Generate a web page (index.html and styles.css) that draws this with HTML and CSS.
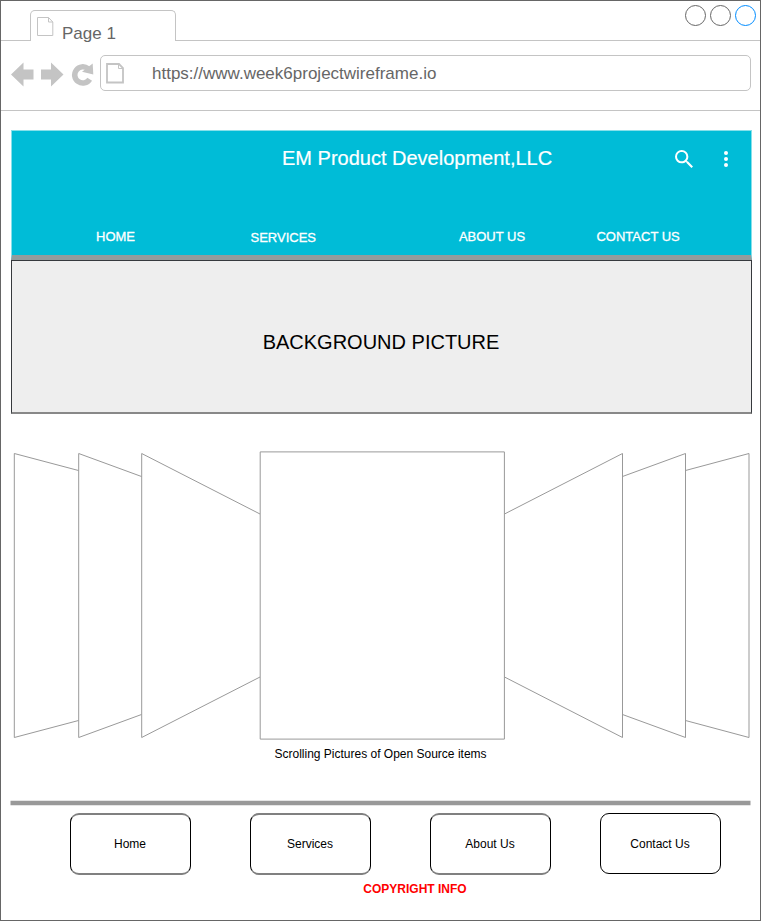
FILE: index.html
```html
<!DOCTYPE html>
<html lang="en">
<head>
<meta charset="utf-8">
<title>Page 1</title>
<link rel="stylesheet" href="styles.css">
</head>
<body>
<div class="window">
  <div class="tabs">
    <div class="tab">
      <svg class="tab-icon" width="17" height="20" viewBox="0 0 17 20"><path d="M.5.5H11.5L15.8 5V18.5H.5ZM11.5.5V5H15.8"/></svg>
      <span>Page 1</span>
    </div>
    <div class="controls"><i></i><i></i><i class="active"></i></div>
  </div>
  <div class="toolbar">
    <svg class="nav-icons" width="84" height="26" viewBox="0 0 84 26">
      <path d="M0 12.5 12.5 0.5V7.5H22.5V17.5H12.5V24.5Z"/>
      <path d="M52.5 12.5 40 0.5V7.5H30V17.5H40V24.5Z"/>
      <path class="reload" d="M78.7 17.2A8.1 8.1 0 1 1 77 6.7"/>
      <path d="M81.7 1.5 82.3 12.5 71 9.8Z"/>
    </svg>
    <div class="address">
      <svg width="19" height="22" viewBox="0 0 19 22"><path d="M1 1H13L17 5V19.5H1Z"/><path class="fold" d="M12.5 1V5.5H17"/></svg>
      <span>https://www.week6projectwireframe.io</span>
    </div>
  </div>
  <main>
    <header>
      <div class="brand">
        <h1>EM Product Development,LLC</h1>
        <svg class="search" width="18" height="18" viewBox="3 3 17.5 17.5"><path d="M15.5 14h-.79l-.28-.27A6.47 6.47 0 0 0 16 9.5 6.5 6.5 0 1 0 9.5 16c1.61 0 3.09-.59 4.23-1.57l.27.28v.79l5 4.99L20.49 19zm-6 0C7.01 14 5 11.99 5 9.5S7.01 5 9.5 5 14 7.01 14 9.5 11.99 14 9.5 14z"/></svg>
        <svg class="more" width="4" height="16" viewBox="0 0 4 16"><circle cx="2" cy="2" r="2"/><circle cx="2" cy="8" r="2"/><circle cx="2" cy="14" r="2"/></svg>
      </div>
      <nav><a>HOME</a><a class="low">SERVICES</a><a>ABOUT US</a><a>CONTACT US</a></nav>
    </header>
    <section class="hero">BACKGROUND PICTURE</section>
    <figure>
      <svg class="coverflow" width="739" height="290" viewBox="11 450 739 290">
        <path d="M78.5 470.5 14.3 453.5V737.5L78.5 720.5M141.5 476.5 78.7 453.5V737.5L141.5 714.5M260 514 141.7 453.5V737.5L260 677"/>
        <path d="M504.5 514 622.5 453.5V737.5L504.5 677M622.5 476.5 685.5 453.5V737.5L622.5 714.5M685.5 470.5 749 453.5V737.5L685.5 720.5"/>
        <path d="M260.2 451.9H504.4V739.1H260.2Z"/>
      </svg>
      <figcaption>Scrolling Pictures of Open Source items</figcaption>
    </figure>
    <footer>
      <svg class="rule" width="741" height="6" viewBox="0 0 741 6"><path d="M.5.7H740.5V5.3H.5Z"/></svg>
      <div class="links"><a>Home</a><a>Services</a><a>About Us</a><a class="last">Contact Us</a></div>
      <p>COPYRIGHT INFO</p>
    </footer>
  </main>
</div>
</body>
</html>
```
FILE: styles.css
```css
* { box-sizing: border-box; }
body { margin: 0; background: #fff; font-family: "Liberation Sans", Arial, sans-serif; }
svg { display: block; flex: none; }
h1, p, figure { margin: 0; font-weight: normal; }

.window { width: 761px; height: 921px; border: 1px solid #666; }

.tabs { display: flex; justify-content: space-between; height: 40px; padding: 9px 0 0 29px; border-bottom: 1px solid #c4c4c4; }
.tab { display: flex; width: 146px; height: 31px; padding: 6px 0 0 6px; border: 1px solid #c4c4c4; border-bottom: 0; border-radius: 5px 5px 0 0; background: #fff; }
.tab-icon { fill: none; stroke: #c4c4c4; stroke-width: 1; }
.tab span { margin: 7px 0 0 8px; color: #666; font-size: 17px; line-height: 20px; }
.controls { display: flex; gap: 4px; margin: -5px 4px 0 0; }
.controls i { width: 21px; height: 21px; border: 1px solid #666; border-radius: 50%; }
.controls .active { border-color: #008cff; }

.toolbar { display: flex; height: 70px; padding: 14px 9px 0 10px; border-bottom: 1px solid #c4c4c4; }
.nav-icons { margin: 7px -5px 0 0; fill: #c4c4c4; }
.reload { fill: none; stroke: #c4c4c4; stroke-width: 5.5; }
.address { display: flex; align-items: center; flex: 1; height: 36px; margin-left: 10px; padding-left: 5px; border: 1px solid #c4c4c4; border-radius: 5px; color: #666; font-size: 17px; }
.address svg { margin-top: 2px; fill: none; stroke: #c4c4c4; stroke-width: 1.8; }
.address .fold { stroke-width: 1; }
.address span { margin: 2px 0 0 27px; }

main { width: 741px; margin: 19px 0 0 10px; }
header { height: 130px; border: 1px solid #86e0ea; border-bottom: 5px solid #919c9d; background: #00bcd7; color: #fff; }
.brand { display: flex; height: 56px; padding-left: 270px; align-items: center; }
h1 { width: 393px; margin-top: -2px; font-size: 20px; line-height: 24px; -webkit-text-stroke: .2px #fff; }
.search { margin-top: -1px; fill: #fff; }
.more { margin-left: 31px; fill: #fff; }
nav { display: flex; margin-top: 42px; padding-left: 84px; font-size: 13px; line-height: 15px; -webkit-text-stroke: .3px #fff; }
nav a { width: 155px; }
nav .low { width: 209px; padding-top: 1px; }
nav a:nth-child(3) { width: 138px; }

.hero { display: flex; align-items: center; justify-content: center; height: 154px; padding: 11px 1px 0 0; border: 1px solid #36393d; border-bottom: 2px solid #888; background: #eee; font-size: 20px; }

figure { padding-top: 36px; }
.coverflow { fill: none; stroke: #999; stroke-width: 1; }
figcaption { margin: 7px 2px 0 0; font-size: 12px; line-height: 14px; text-align: center; }

footer { width: 741px; margin: 38px 0 0 -1px; text-align: center; }
.rule { position: relative; top: .5px; fill: #999; }
.links { display: flex; gap: 59px; padding: 8px 0 0 60px; }
.links a { display: flex; width: 121px; height: 62px; padding: 0 1px 1px 0; align-items: center; justify-content: center; border: solid; border-width: 2px 1px; border-color: #808080 #000; border-radius: 9px; font-size: 12px; }
.links .last { height: 61px; margin-left: -10px; padding-bottom: 0; border: 1px solid #000; }
footer p { margin: 7px 0 0 69px; color: #f00; font-size: 12px; line-height: 14px; font-weight: bold; }
```
